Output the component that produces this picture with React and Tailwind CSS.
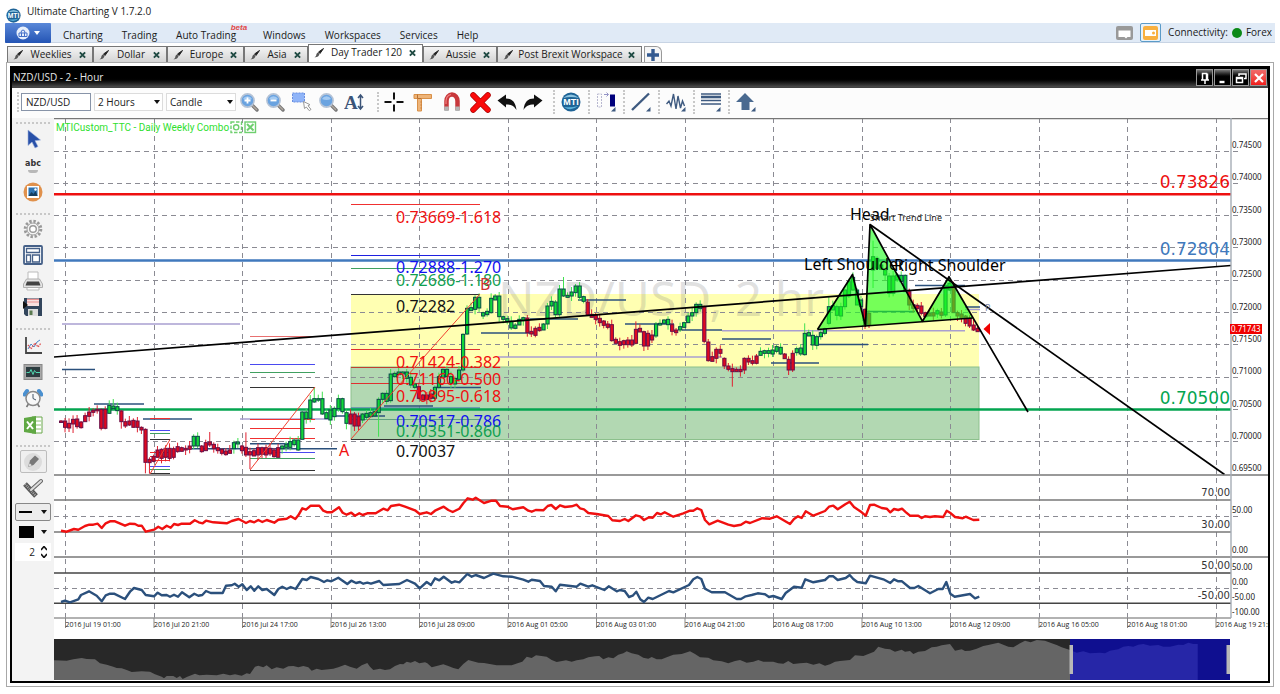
import { useState } from 'react';

const TABS = [
    { name: 'Weeklies', width: 'w-[86px]' },
    { name: 'Dollar', width: 'w-[74px]' },
    { name: 'Europe', width: 'w-[77px]' },
    { name: 'Asia', width: 'w-[64px]' },
    { name: 'Day Trader 120', width: 'w-[115px]' },
    { name: 'Aussie', width: 'w-[74px]' },
    { name: 'Post Brexit Workspace', width: 'w-[145px]' },
]

const MENU = ['Charting', 'Trading', 'Auto Trading', 'Windows', 'Workspaces', 'Services', 'Help']

const DATES = [
    '2016 Jul 19 01:00', '2016 Jul 20 21:00', '2016 Jul 24 17:00', '2016 Jul 26 13:00', '2016 Jul 28 09:00',
    '2016 Aug 01 05:00', '2016 Aug 03 01:00', '2016 Aug 04 21:00', '2016 Aug 08 17:00', '2016 Aug 10 13:00',
    '2016 Aug 12 09:00', '2016 Aug 16 05:00', '2016 Aug 18 01:00', '2016 Aug 19 21:00',
]

// candle bodies as "top-bottom" in thirds of a unit below the given origin, r / g switches the colour
const CANDLES = [
    {
        origin: 340,
        bars: `r 243-247 243-262 250-264 238-252 237-260 246-263 227-245 216-229 211-217 208-212 208-265 208-265
        g 196-220 198-206 200-212 r 213-245 245-258 243-255 241-262 243-262 262-270 268-367 358-368 350-364 330-352
        328-355 325-352 325-355 326-352 320-335 323-334 325-330 318-328 g 289-318 289-318 r 318-335 308-332 306-315
        313-326 323-332 328-340 333-344 330-340 g 308-326 306-312 r 318-332 322-345 335-345 332-348 323-345 323-343
        323-345 325-342 330-350 323-352 g 318-326 314-322 305-322 300-314 300-330 216-298 216-236 180-235 176-186
        176-180 176-222 218-236`,
    },
    {
        origin: 190,
        bars: `g 660-690 655-680 626-656 626-665 668-700 r 672-702 672-708 680-708 g 672-690 670-682 668-680 665-678
        628-668 610-628 610-634 552-632 550-560 546-554 546-552 546-565 562-585 582-592 r 590-625 615-630 615-628
        612-625 g 592-625 560-592 538-562 538-560 560-580 565-582 540-568 433-540 355-432 353-362 322-358 322-354
        368-378 364-374 325-368 318-330 318-380 380-388 386-394 394-414 405-415 388-405 383-392 r 384-428 424-432
        415-436 412-422 g 402-420 348-402 334-348 336-374 297-374 297-318 316-322 306-318 288-308 288-322 320-334
        r 336-375 373-382 375-388 385-398 393-406 402-412 404-452 448-460 455-466 452-464 450-464 450-465 418-460
        415-426 425-468 430-468 435-450 g 402-438 400-405 390-400 388-404 r 404-424 420-428 g 410-420 398-412
        378-398 368-378 343-368 343-356 r 350-454 456-512 500-514 478-505 478-490 505-528 528-538 536-545 538-545
        538-545 505-540 505-516 512-520 498-520 g 484-496 482-490 482-490 480-492 470-484 472-492 r 492-506 508-540
        490-540 g 476-488 474-492 430-494 428-438 436-465 440-466 428-440 416-430 350-400 347-360 350-376 350-378
        300-350 275-318 262-300 300-345 330-350 r 358-405 370-405 g 200-240 205-235 225-238 240-255 258-310 258-310
        255-270 256-275 256-305 r 305-345 344-355 346-356 348-370 368-380 370-378 368-378 g 362-372 r 366-376
        g 290-375 280-300 r 290-368 368-378 372-385 378-400 385-408 405-420 415-425`,
    },
]

// long wicks, by candle index: [up, down]
const LONG_WICKS = { 3: [4, 9], 13: [7, 1], 15: [1, 7], 21: [1, 11], 22: [2, 11], 37: [10, 2], 46: [15, 2], 47: [4, 14], 63: [11, 1], 65: [7, 1], 71: [3, 6], 79: [2, 24], 125: [12, 1], 143: [8, 1], 167: [5, 15], 182: [3, 2], 185: [10, 1], 191: [10, 2], 202: [16, 18] }

const buildCandles = () => {
    const list = []
    let color = 'r'
    CANDLES.forEach(({ origin, bars }) => {
        bars.trim().split(/\s+/).forEach((token) => {
            if (token === 'r' || token === 'g') {
                color = token
                return
            }
            const [top, bottom] = token.split('-').map((n) => origin + Number(n) / 3)
            const i = list.length
            const wick = LONG_WICKS[i] || [((i * 7) % 5) + 1, ((i * 11) % 6)]
            list.push({ x: 61 + i * 4.02, top, bottom, high: top - wick[0], low: bottom + wick[1], color })
        })
    })
    return list
}

const RSI = [
    [50, '33,152 50,155 72,147 85,149 105,138 118,134 130,134 143,131 155,144 167,130 180,124 195,124 225,137 240,131 255,132 265,137 275,137 287,155 312,149 325,140 337,147 350,137 362,143 372,132 384,135 395,131 420,131 434,121 446,127 458,130 468,122 490,127 530,130 545,123 566,117 588,129 600,123 613,127 625,120 637,126 650,120 673,128 685,119 710,116 722,109 736,117 745,106 757,85 768,89 782,77 808,77 820,92 832,97 845,97 867,82 878,98 890,104 904,98 915,107 928,100 938,105 952,100 977,100 1000,86 1013,91 1023,78 1047,74 1065,80 1095,91 1109,102 1130,97 1143,102 1155,92 1181,80 1195,90 1208,96 1228,86 1240,70 1253,55 1268,59 1277,53'],
    [480, '12,69 35,62 48,62 60,78 83,80 98,88 130,82 145,92 155,95 167,90 190,91 203,78 214,75 227,87 240,76 255,81 275,79 290,74 300,85 312,88 325,99 350,102 385,108 397,121 420,123 434,117 445,123 468,106 480,109 492,120 507,112 518,113 531,99 543,103 554,97 580,110 610,100 630,92 640,92 652,85 664,90 675,120 688,133 713,122 745,134 762,138 783,134 797,125 810,129 845,115 870,116 890,109 930,132 942,117 954,109 965,114 977,94 1000,107 1035,93 1047,80 1060,77 1073,88 1096,73 1109,65 1122,81 1145,97 1157,107'],
    [870, '0,75 12,74 35,84 50,86 61,97 72,87 85,90 96,86 108,97 120,107 145,107 155,114 165,109 180,111 195,109 220,111 230,92 240,98 255,111 278,115 287,110 310,120 328,119'],
]

const MOMENTUM = [
    [50, '33,366 45,362 60,367 85,358 93,345 117,334 140,347 155,364 167,346 180,341 192,341 225,357 240,335 252,324 275,330 287,345 312,349 323,338 335,346 350,345 360,350 372,344 384,350 396,337 418,352 433,341 445,347 457,345 468,333 482,339 518,339 528,317 545,316 554,311 566,320 577,313 590,330 602,319 613,332 625,319 637,330 650,327 673,345 685,327 697,320 710,327 722,321 737,327 757,297 770,300 782,291 805,297 822,306 832,301 844,304 865,293 892,312 904,302 918,309 930,306 940,311 952,308 963,311 988,303 1000,315 1048,312 1071,300 1095,311 1109,325 1130,306 1143,315 1155,295 1168,301 1181,290 1205,308 1215,304 1228,307 1252,282 1265,290 1277,285'],
    [480, '12,294 40,281 70,289 95,290 130,299 145,305 155,299 180,303 192,318 215,320 227,334 240,314 290,320 301,311 325,320 337,316 373,330 386,319 410,334 420,330 434,333 447,351 458,347 469,335 481,358 492,366 505,353 518,357 567,333 580,337 627,315 640,298 652,291 664,297 675,326 695,337 735,337 770,357 783,357 797,349 815,345 833,340 855,343 867,351 880,348 905,357 917,339 942,320 965,323 976,298 1000,307 1035,300 1047,289 1060,289 1073,300 1097,294 1109,285 1120,297 1132,306 1157,310'],
    [870, '0,287 40,298 61,309 72,298 85,304 96,304 120,324 133,324 145,318 180,340 205,327 218,327 229,306 241,341 254,350 300,342 315,355 328,350'],
]

const HISTORY = [
    [50, '12,541 50,542 70,538 95,534 110,537 135,538 150,550 170,554 190,560 200,564 215,565 230,570 245,576 275,574 300,575 315,583 335,590 342,595 350,588 370,588 380,594 390,588 398,597 412,590 435,581 448,586 470,584 500,586 520,581 540,586 555,583 575,587 590,580 600,582 615,560 625,557 640,562 650,556 665,568 680,562 700,566 715,559 730,558 745,562 760,558 775,562 785,572 800,566 815,570 850,566 865,562 885,554 900,560 920,566 935,556 952,549 960,560 970,570 990,566 1005,570 1020,568 1035,558 1050,552 1060,553 1070,545 1082,548 1095,543 1108,550 1125,547 1132,550 1145,562 1160,558 1180,553 1195,558 1210,564 1225,568 1240,552 1255,540 1285,548'],
    [480, '12,549 50,556 95,556 115,549 127,545 140,530 155,534 168,526 200,530 215,540 230,546 258,541 275,545 290,541 310,538 325,532 345,529 358,528 370,538 385,532 400,535 415,524 430,520 440,514 455,520 475,524 490,533 505,536 515,531 530,538 545,538 560,532 580,524 605,522 630,514 645,522 660,532 685,533 700,541 725,544 745,550 765,543 780,540 800,548 820,545 835,540 850,545 880,545 895,550 910,551 925,543 940,552 960,550 980,548 1000,554 1018,550 1035,557 1050,553 1065,545 1080,543 1110,540 1125,526 1150,528'],
    [870, '12,515 25,500 45,506 60,508 75,515 95,509 105,515 120,513 130,522 145,515 165,513 185,502 200,500 215,496 240,492 255,512 275,508 285,513 300,512 320,506 340,498 355,495 385,488 400,494 415,500 430,502 450,490 465,482 482,487 500,480 525,482 545,490 560,495 575,502 600,510 620,518 640,514 660,520 690,518 705,520 720,512 745,508 760,500 775,498 790,500 805,494 820,492 840,497 865,495 880,500 900,500 925,494 940,495 955,488 970,492 983,492'],
]

const tracePoints = (trace) =>
    trace.map(([left, pairs]) =>
        pairs.split(' ').map((pair) => {
            const [x, y] = pair.split(',').map(Number)
            return `${(left + x / 3).toFixed(1)},${(480 + y / 3).toFixed(1)}`
        }).join(' ')
    ).join(' ')

const NAVY = '#2b507c'
const PURPLE = '#a99fd0'

// [x1, x2, y, colour]
const PIVOTS = [
    [62, 240, 324, PURPLE], [62, 95, 369.5, NAVY], [94, 144, 404, NAVY], [143, 192, 419, NAVY],
    [192, 337, 448.7, NAVY], [250, 292, 443.7, NAVY], [240, 331, 419, PURPLE], [331, 385, 416, NAVY],
    [384, 433, 406, NAVY], [434, 481, 387.5, NAVY], [481, 535, 333, NAVY], [530, 578, 319, NAVY],
    [578, 626, 300, NAVY], [498, 722, 357, PURPLE], [625, 674, 324, NAVY], [682, 722, 330, NAVY],
    [722, 965, 330.7, PURPLE], [722, 771, 339, NAVY], [771, 819, 363, NAVY], [819, 868, 344.5, NAVY],
    [867, 915, 311.5, NAVY], [915, 965, 285.5, NAVY], [965, 980, 307, NAVY], [965, 980, 309.5, PURPLE],
]

const FIB_LINES = [
    [250, 315, 336.5, '#e87070'], [250, 315, 364.5, '#4a4af0'], [250, 315, 372.5, '#40a060'], [250, 315, 387.5, '#333'],
    [250, 315, 419.5, '#f03030'], [250, 315, 428.5, '#f03030'], [250, 315, 438.5, '#f03030'], [250, 315, 452.5, '#4a4af0'],
    [250, 315, 458.5, '#40a060'], [250, 315, 470.5, '#333'],
    [150, 170, 418.5, '#f03030'], [150, 170, 430.5, '#4a4af0'], [150, 170, 433.5, '#40a060'], [150, 170, 439.5, '#333'],
    [150, 170, 452.5, '#f03030'], [150, 170, 456.5, '#f03030'], [150, 170, 460.5, '#f03030'], [150, 170, 466.5, '#4a4af0'],
    [150, 170, 469.5, '#40a060'], [150, 170, 473.5, '#333'],
    [351, 480, 204.5, '#f03030'], [351, 480, 255.5, '#2020e0'], [351, 480, 268.5, '#40a060'], [351, 480, 294.5, '#333'],
    [351, 480, 349.5, '#e03030'], [351, 480, 367.5, '#c04030'], [351, 480, 383.5, '#e03030'], [351, 480, 408, '#3060b0'],
    [351, 480, 419.5, '#60a080'], [351, 480, 439.5, '#333'],
]

const FIB_LABELS = [
    ['0.73669-1.618', 222.5, '#f01010'], ['0.72888-1.270', 273, '#1010f0'], ['0.72686-1.180', 286, '#10a050'],
    ['0.72282', 312, '#111'], ['0.71424-0.382', 367.5, '#f01010'], ['0.71160-0.500', 385, '#f01010'],
    ['0.70895-0.618', 402, '#f01010'], ['0.70517-0.786', 426.5, '#1010f0'], ['0.70351-0.860', 437, '#10a050'],
    ['0.70037', 457, '#111'],
]

const LEVELS = [
    { label: '0.73826', y: 194.3, color: '#ee1010' },
    { label: '0.72804', y: 260.6, color: '#4079bd' },
    { label: '0.70500', y: 409.6, color: '#04a550' },
]

const PriceChart = () => {
    const candles = buildCandles()
    const gridX = DATES.map((_, i) => 65.5 + i * 88.5)
    const gridY = Array.from({ length: 10 }, (_, i) => 151 + i * 32.33)

    return (
        <svg viewBox="54 118 1214 518" className="block h-auto w-full bg-white" role="img" aria-label="NZD/USD 2 hour candles">
            <rect x="351" y="294" width="628" height="73" fill="#ffffb2" />
            <rect x="351" y="367" width="628" height="72.5" fill="#b2d8b2" stroke="#8cc08c" />
            <text x="498" y="316" className="font-['Noto_Sans'] text-[48px]" fill="#777" fillOpacity=".22">NZD/USD, 2 hr</text>

            <g stroke="#8b8b93" strokeDasharray="5 4" shapeRendering="crispEdges">
                {gridX.map((x) => <line key={x} x1={x} x2={x} y1="118" y2="618" />)}
                {gridY.map((y) => <line key={y} x1="54" x2="1238" y1={y} y2={y} />)}
                <line x1="54" x2="1238" y1="516" y2="516" />
                <line x1="54" x2="1238" y1="588" y2="588" />
            </g>

            {PIVOTS.map(([x1, x2, y, color], i) => <line key={i} x1={x1} x2={x2} y1={y} y2={y} stroke={color} strokeWidth="1.5" />)}
            {FIB_LINES.map(([x1, x2, y, color], i) => <line key={i} x1={x1} x2={x2} y1={y} y2={y} stroke={color} />)}
            {LEVELS.map(({ y, color }) => <line key={y} x1="54" x2="1231" y1={y} y2={y} stroke={color} strokeWidth="2.5" />)}

            {candles.map(({ x, top, bottom, high, low, color }, i) => (
                <g key={i}>
                    <line x1={x} x2={x} y1={high} y2={low} stroke={color === 'r' ? '#e02030' : '#40e050'} />
                    <rect x={x - 1.5} y={top} width="3.2" height={Math.max(bottom - top, 1.5)}
                        fill={color === 'r' ? '#e00820' : '#10d838'} stroke={color === 'r' ? '#681048' : '#0a4848'} />
                </g>
            ))}

            <g stroke="#f04030">
                <line x1="150" y1="474" x2="170" y2="439.5" />
                <line x1="250" y1="470" x2="315" y2="387" />
                <line x1="351" y1="439" x2="480" y2="294" />
            </g>

            <path d="M817.5 329.5 852.5 274.5 865.5 326 870 224.5 922.5 321.3 949 276.7 972.7 318Z" fill="#20ff20" fillOpacity=".62" />
            <g fill="none" stroke="#000" strokeWidth="1.7" strokeLinejoin="round">
                <path d="M817.5 329.5 852.5 274.5 865.5 326 870 224.5 922.5 321.3 949 276.7 1028 412" />
                <path d="M817.5 329.5 972.7 318" />
                <path d="M54 357 1231 265.5" />
                <path d="M870 224.5 1224.5 474.5" />
            </g>
            <path d="M983.5 329 990 323v12Z" fill="#f00000" />

            <g className="font-['Noto_Sans'] text-[16px]">
                {FIB_LABELS.map(([label, y, color]) => <text key={label} x="396" y={y} fill={color}>{label}</text>)}
                <text x="339" y="456" fill="#f01010">A</text>
                <text x="480" y="290" fill="#d03030">B</text>
                <text x="850" y="220">Head</text>
                <text x="804" y="270">Left Shoulder</text>
                <text x="894" y="271">Right Shoulder</text>
            </g>
            <text x="870" y="221" className="font-['Noto_Sans'] text-[9px]" fill="#222">Smart Trend Line</text>
            <text x="985" y="311" className="font-['Noto_Sans'] text-[9px]" fill="#7a86a8">P</text>

            <g className="font-['DejaVu_Sans'] text-[17px]" textAnchor="end">
                {LEVELS.map(({ label, y, color }) => <text key={label} x="1230" y={y - 6} fill={color}>{label}</text>)}
            </g>

            {/* indicator panels */}
            <g stroke="#777" strokeWidth="1.4">
                <line x1="54" x2="1268" y1="118.5" y2="118.5" />
                <line x1="54" x2="1268" y1="475" y2="475" />
                <line x1="54" x2="1231" y1="500" y2="500" />
                <line x1="54" x2="1231" y1="532" y2="532" />
                <line x1="54" x2="1268" y1="557" y2="557" />
                <line x1="54" x2="1231" y1="573" y2="573" stroke="#444" />
                <line x1="54" x2="1231" y1="603.3" y2="603.3" stroke="#444" />
                <line x1="54" x2="1231" y1="618" y2="618" stroke="#999" />
                <line x1="1231" x2="1231" y1="118" y2="618" stroke="#a5adb5" />
            </g>
            <polyline points={tracePoints(RSI)} fill="none" stroke="#f01010" strokeWidth="2.4" strokeLinejoin="round" />
            <polyline points={tracePoints(MOMENTUM)} fill="none" stroke={NAVY} strokeWidth="2.4" strokeLinejoin="round" />

            <g className="font-['DejaVu_Sans'] text-[10px]" fill="#333" textAnchor="end">
                <text x="1230" y="496">70.00</text>
                <text x="1230" y="528">30.00</text>
                <text x="1230" y="569">50.00</text>
                <text x="1230" y="599">-50.00</text>
            </g>
            <g className="font-['Noto_Sans'] text-[8px]" fill="#222">
                {gridY.map((y, i) => <text key={y} x="1232" y={y - 3}>{(0.745 - i * 0.005).toFixed(5)}</text>)}
                <text x="1232" y="471">0.69500</text>
                <text x="1232" y="513">50.00</text>
                <text x="1232" y="553">0.00</text>
                <text x="1232" y="570">50.00</text>
                <text x="1232" y="585">0.00</text>
                <text x="1232" y="600">-50.00</text>
                <text x="1232" y="615">-100.00</text>
            </g>
            <rect x="1230" y="324" width="32" height="10" fill="#f00000" />
            <text x="1231" y="332" className="font-['Noto_Sans'] text-[8px]" fill="#fff">0.71743</text>

            <g className="font-['Open_Sans'] text-[7px]" fill="#222">
                {DATES.map((date, i) => (
                    <g key={date}>
                        <line x1={gridX[i]} x2={gridX[i]} y1="618" y2="628" stroke="#888" />
                        <text x={gridX[i]} y="627">{date}</text>
                    </g>
                ))}
            </g>
            <text x="56" y="131" className="font-['Roboto'] text-[10px]" fill="#2fe02f">MTICustom_TTC - Daily Weekly Combo</text>
            <g fill="none" stroke="#6fcf6f" strokeWidth="1.4">
                <rect x="231" y="122" width="10.5" height="10.5" strokeDasharray="3.5 1.5" />
                <circle cx="236.2" cy="127.3" r="2.6" />
                <rect x="245" y="122" width="10.5" height="10.5" />
                <path d="m247 124 6.5 6.5m0-6.5-6.5 6.5" strokeWidth="2" />
            </g>
        </svg>
    )
}

const Navigator = () => {
    const points = tracePoints(HISTORY)
    return (
        <svg viewBox="54 639 1176 41" preserveAspectRatio="none" className="block h-[41px] w-full bg-[#282828]" role="img" aria-label="History range">
            <polygon points={`54,680 ${points} 1197.7,680`} fill="#656565" />
            <rect x="1070" y="639" width="160" height="41" fill="#0000d0" fillOpacity=".62" />
            <rect x="1069.5" y="645" width="3.5" height="29" fill="#b8b8b8" />
            <rect x="1226.5" y="645" width="3.5" height="29" fill="#b8b8b8" />
        </svg>
    )
}

const Svg = ({ size = 'h-5 w-5', children }) => (
    <svg viewBox="0 0 20 20" className={`${size} shrink-0`} fill="none" aria-hidden="true">{children}</svg>
)

const Caret = ({ color = '#111', className = 'h-1 w-[6px]' }) => (
    <svg viewBox="0 0 6 4" className={className} aria-hidden="true"><path d="M0 0h6L3 4Z" fill={color} /></svg>
)

const Magnifier = ({ children }) => (
    <Svg>
        <path d="m13 13 5 5" stroke="#777" strokeWidth="3.4" strokeLinecap="round" />
        <path d="m13 13 4.6 4.6" stroke="#b0a8a0" strokeWidth="1.4" strokeLinecap="round" />
        <circle cx="8.5" cy="8.5" r="6.6" fill="#6aa3e0" stroke="#b5c3d6" strokeWidth="1.6" />
        <path d="M4 7a5 5 0 0 1 9 0q-4.5 2-9 0" fill="#a3caf2" />
        {children}
    </Svg>
)

const Globe = ({ size }) => (
    <Svg size={size}>
        <circle cx="10" cy="10" r="9.5" fill="#1d6396" />
        <path d="M2 6q8-7 16 0-8-2-16 0" fill="#8cc3e0" />
        <path d="M3 15q7 5 14-1-7 2-14 1" fill="#5ab0d8" />
        <text x="10" y="13" textAnchor="middle" className="font-['Liberation_Sans'] text-[9px] font-bold" fill="#fff">MTI</text>
    </Svg>
)

const Corner = () => <path d="M19.5 15v4.5H15Z" fill="#3e5a80" />

const ToolButton = ({ label, width = 'w-[26px]', children }) => (
    <button aria-label={label} title={label} className={`flex h-6 items-center justify-center ${width}`}>{children}</button>
)

const ToolGroup = ({ label, children }) => (
    <div className="flex w-[35px] items-center border-l-2 border-dotted border-[#c8c8c8]">
        <ToolButton label={label} width="w-[31px]">{children}</ToolButton>
    </div>
)

const Picker = ({ label, value, options, width }) => (
    <div className={`relative ${width}`}>
        <select aria-label={label} defaultValue={value} className="block h-[18px] w-full appearance-none border border-[#dcdcdc] bg-white pl-[3px] text-[10px] leading-[16px] text-[#222]">
            {options.map((option) => <option key={option}>{option}</option>)}
        </select>
        <Caret className="pointer-events-none absolute right-[3px] top-[7px] h-1 w-[6px]" />
    </div>
)

const Toolbar = () => {
    const [symbol, setSymbol] = useState('NZD/USD')
    return (
        <div className="flex h-[30px] items-center bg-[#fcfcfc] pb-[2px] pl-[5px]">
            <span className="mr-[2px] h-5 border-l-2 border-dotted border-[#c8c8c8]"></span>
            <input aria-label="Symbol" value={symbol} onChange={(e) => setSymbol(e.target.value)} className="mr-[3px] h-[18px] w-[70px] border border-[#8894a8] bg-white pl-1 text-[10px] text-[#222]" />
            <Picker label="Period" value="2 Hours" options={['1 Hour', '2 Hours', '4 Hours']} width="mr-[3px] w-[69px]" />
            <Picker label="Chart type" value="Candle" options={['Candle', 'Bar', 'Line']} width="w-[70px]" />
            <ToolButton label="Zoom in"><Magnifier><path d="M5.5 8.5h6m-3-3v6" stroke="#fff" strokeWidth="1.8" /></Magnifier></ToolButton>
            <ToolButton label="Zoom out"><Magnifier><path d="M5.5 8.5h6" stroke="#fff" strokeWidth="1.8" /></Magnifier></ToolButton>
            <ToolButton label="Select area" width="w-[27px]">
                <Svg>
                    <rect x=".5" y="1" width="12" height="9" fill="#8fb4f8" stroke="#6a8fe0" strokeDasharray="2 1" />
                    <path d="m11.5 9.5 1 7 1.8-1.5 3 3.7 1.7-1.3-3-3.7 2-1Z" fill="#fff" stroke="#999" />
                </Svg>
            </ToolButton>
            <ToolButton label="Reset zoom"><Magnifier /></ToolButton>
            <ToolButton label="Text size">
                <Svg>
                    <text x="0" y="17" className="font-['Liberation_Serif'] text-[19px] font-bold" fill="#3b5478">A</text>
                    <path d="M16.5 3v14m-2.5-11 2.5-3 2.5 3m-5 8 2.5 3 2.500-3" stroke="#3b5478" strokeWidth="1.5" />
                </Svg>
            </ToolButton>
            <span className="ml-[10px] h-5 border-l-2 border-dotted border-[#c8c8c8]"></span>
            <ToolButton label="Crosshair" width="w-[29px]"><Svg><path d="M10 .5v7m0 5v7M.5 10h7m5 0h7" stroke="#111" strokeWidth="2" /></Svg></ToolButton>
            <ToolButton label="Ruler" width="w-[29px]">
                <Svg><path d="M1 2.5h17.5v4H8.5V19h-4V6.5H1Z" fill="#eeb478" stroke="#d89048" /><path d="M4.5 6.500v-4m4 4h-4m3 3.500h1m-1 3h1m-1 3h1" stroke="#b87030" /></Svg>
            </ToolButton>
            <ToolButton label="Magnet" width="w-[29px]">
                <Svg><path d="M4.5 18V9a5.5 6.5 0 0 1 11 0v9" stroke="#c8383c" strokeWidth="4.5" /><path d="M4.5 14.5V19m11-4.5V19" stroke="#b4b4b4" strokeWidth="4.5" /><path d="M4 12V9a6 7 0 0 1 5-6.5" stroke="#f08080" strokeWidth="1.2" /></Svg>
            </ToolButton>
            <ToolButton label="Delete" width="w-[28px]"><Svg size="h-[21px] w-[21px]"><path d="M3 3 17 17M17 3 3 17" stroke="#a80000" strokeWidth="5.5" strokeLinecap="round" /><path d="M3 3 17 17M17 3 3 17" stroke="#fa0a0a" strokeWidth="4.3" strokeLinecap="round" /></Svg></ToolButton>
            <ToolButton label="Undo"><Svg><path d="M.5 8.5 9 2.5v4c6 0 9.5 3 10.5 11.5-2.500-4-5-5.500-10.500-5.500v3Z" fill="#111" /></Svg></ToolButton>
            <ToolButton label="Redo"><Svg><path d="M19.5 8.5 11 2.5v4C5 6.5 1.5 9.5.5 18c2.500-4 5-5.500 10.500-5.500v3Z" fill="#111" /></Svg></ToolButton>
            <div className="ml-[7px] flex">
                <ToolGroup label="MTI tools"><Globe /></ToolGroup>
                <ToolGroup label="Candle shift"><Svg><path d="M1.5 2h4v13h-4Z" stroke="#b8b8d0" strokeDasharray="2 1" /><path d="M8 2.5h4m-1.5-2 2 2-2 2" stroke="#7878b8" strokeWidth=".8" /><path d="M14 2.5h5v12h-5Z" fill="#00007c" /><Corner /></Svg></ToolGroup>
                <ToolGroup label="Line"><Svg><path d="M1 18 18 1.5" stroke="#3e5a80" strokeWidth="2.4" /><Corner /></Svg></ToolGroup>
                <ToolGroup label="Wave"><Svg><path d="m.5 12 2.5-3 2 5 2.5-12L10 17l2-13 2.5 12 2-7 2 5" stroke="#3e5a80" strokeWidth="1.4" /><Corner /></Svg></ToolGroup>
                <ToolGroup label="Fibonacci"><Svg><path d="M0 2h20M0 8.5h20M0 12h20" stroke="#3e5a80" strokeWidth="1.6" /><path d="M0 5h20" stroke="#3e5a80" strokeWidth="2.6" /><Corner /></Svg></ToolGroup>
                <ToolGroup label="Arrow"><Svg><path d="M9 1 18 10h-4.5v8h-8v-8H0Z" fill="#4a6a90" /><Corner /></Svg></ToolGroup>
            </div>
        </div>
    )
}

const SideButton = ({ label, height = 'h-[26px]', children }) => (
    <button aria-label={label} title={label} className={`flex w-full items-center justify-center ${height}`}>{children}</button>
)

const Divider = () => <div className="mx-1 h-[10px] border-t-2 border-dotted border-[#c8c8c8]"></div>

const SideBar = () => {
    const [size, setSize] = useState('2')
    return (
        <div className="flex w-[42px] shrink-0 flex-col bg-[#f3f3f3] pt-1">
            <Divider />
            <SideButton label="Pointer" height="-mt-[7px] h-[27px]"><Svg><path d="M5 1v15.5l4-3.5 3 6 3-1.5-3-5.8 5.5-.7Z" fill="#2850a8" stroke="#9ab0dc" strokeWidth=".6" /></Svg></SideButton>
            <SideButton label="Text" height="h-[27px]"><span className="font-['DejaVu_Sans'] text-[8px] font-bold leading-[12px] text-[#333]">abc<span className="mx-auto block h-[3px] w-[10px] rounded-b-full bg-[#b8b8b8]"></span></span></SideButton>
            <SideButton label="Image">
                <Svg><circle cx="10" cy="10" r="9.5" fill="#e0914c" /><rect x="4" y="4" width="12" height="12" fill="#fff" /><rect x="5.5" y="5.5" width="9" height="8.5" fill="#2d72b0" /><path d="m5.5 14 3-4 2 2 2-3 2 5Z" fill="#153e60" /><circle cx="12.5" cy="7.5" r="1.2" fill="#fff" /></Svg>
            </SideButton>
            <div className="h-[8px]"></div>
            <Divider />
            <SideButton label="Settings" height="-mt-[7px] h-[26px]"><Svg><circle cx="10" cy="10" r="7.8" stroke="#999" strokeWidth="3" strokeDasharray="2.4 1.7" /><circle cx="10" cy="10" r="6" fill="#f4f4f4" stroke="#a0a0a0" /><circle cx="10" cy="10" r="3.3" fill="#fff" stroke="#999" strokeWidth="1.4" /></Svg></SideButton>
            <SideButton label="Layout"><Svg><rect x="1" y="1" width="18" height="18" rx="1" fill="#fff" stroke="#456088" strokeWidth="1.8" /><path d="M3.5 3.5h13v4h-13Zm0 6.5h4v7h-4Zm6 0h7v7h-7Z" stroke="#456088" strokeWidth="1.3" /></Svg></SideButton>
            <SideButton label="Print"><Svg><path d="M5 9V1h10v8M4 13v6h12v-6" fill="#fff" stroke="#bbb" /><path d="m3.5 8-3 5v3.5h19V13l-3-5Z" fill="#e4e4e4" stroke="#b0b0b0" /><path d="M4 10.5h12l1.5 4h-15Z" fill="#444" /></Svg></SideButton>
            <SideButton label="Save"><Svg><path d="M1 1h18v18H3l-2-2Z" fill="#32455c" /><path d="M4 1.5h12V9H4Z" fill="#f8e0e0" /><path d="M4 2.5h12M4 5h12" stroke="#e89090" /><path d="M5 12h10v7H5Z" fill="#ddd" /><path d="M6.5 13.5h3V18h-3Z" fill="#5a7a50" /><path d="m0 4 5 4-5 4Z" fill="#111" /></Svg></SideButton>
            <div className="h-[8px]"></div>
            <Divider />
            <SideButton label="Indicators" height="-mt-[5px] h-[26px]"><Svg><path d="M3 1v16h16" stroke="#444" strokeWidth="1.8" /><path d="m5 13 3-5 3 3 3-5 3-2" stroke="#4888c8" /><path d="m5 9 3 4 4-6 3 4 3-4" stroke="#e05050" strokeDasharray="1.5 1" strokeWidth="1.3" /></Svg></SideButton>
            <SideButton label="Monitor"><Svg><rect x="1" y="2.5" width="18" height="15" fill="#a8a8a8" stroke="#888" /><rect x="3" y="5" width="14" height="10" fill="#2d3c40" /><path d="M3.5 10.5h3l1.5-3 2 5 1.5-4 1.5 2h4" stroke="#50d8b0" /></Svg></SideButton>
            <SideButton label="Alerts"><Svg><path d="M4 3 1.5 6.5M16 3l2.5 3.5" stroke="#4a90d0" strokeWidth="4" strokeLinecap="round" /><path d="m5.5 16-2 3m11-3 2 3" stroke="#777" strokeWidth="1.6" /><circle cx="10" cy="10.5" r="7" fill="#f8f8f8" stroke="#888" strokeWidth="1.5" /><path d="M10 6v4.5l3 1.5" stroke="#456" /></Svg></SideButton>
            <SideButton label="Export to Excel" height="h-[27px]"><Svg><path d="M9 2h10v16H9Z" fill="#fff" stroke="#6aa84c" /><path d="M13 6h5m-5 4h5m-5 4h5" stroke="#8cc070" /><path d="m1 3 12-2v18L1 17Z" fill="#60a844" /><path d="m4 6.5 6 7.5m0-7.5L4 14" stroke="#fff" strokeWidth="2" /></Svg></SideButton>
            <div className="h-[7px]"></div>
            <Divider />
            <button aria-label="Draw" className="mx-auto -mt-[5px] flex h-[23px] w-[27px] items-center justify-center rounded-[2px] border border-[#bdbdbd] bg-[#efefef]"><Svg><circle cx="10" cy="10" r="9" fill="#dcdcdc" /><path d="m5.5 14.5 1.5-6 5-5 4 3.5-5.5 6Z" fill="#777" /><path d="m5.5 14.5 1-3.5 2.5 2.5Z" fill="#fff" stroke="#888" strokeWidth=".5" /></Svg></button>
            <SideButton label="Measure" height="h-[30px]"><Svg><path d="m2 6 11 12" stroke="#555" strokeWidth="5" /><path d="m2 6 11 12" stroke="#aaa" strokeWidth="2.5" strokeDasharray="1 1" /><path d="m8 12 10-9" stroke="#666" strokeWidth="4" strokeLinecap="round" /><path d="m8 12 10-9" stroke="#ddd" strokeWidth="2" strokeLinecap="round" /></Svg></SideButton>
            <button aria-label="Line style" className="mx-[3px] flex h-[18px] items-center justify-between rounded-[2px] border border-[#888] bg-[#ececec] px-[3px]">
                <span className="h-[2px] w-[13px] bg-black"></span>
                <Caret />
            </button>
            <button aria-label="Line colour" className="mx-[3px] mt-[3px] flex h-[16px] items-center justify-between px-1">
                <span className="h-3 w-[15px] bg-black"></span>
                <Caret />
            </button>
            <div className="mx-[3px] mt-[3px] flex h-[18px] items-center justify-end gap-[6px] bg-white pr-1">
                <input aria-label="Line width" value={size} onChange={(e) => setSize(e.target.value)} className="w-4 bg-transparent text-right text-[10px]" />
                <svg viewBox="0 0 6 12" className="h-3 w-[6px]" aria-hidden="true"><path d="m0 4 3-3.500L6 4M0 8l3 3.500L6 8" fill="none" stroke="#111" strokeWidth="1.6" /></svg>
            </div>
        </div>
    )
}

const WindowButton = ({ label, color = 'bg-linear-to-b from-[#777] via-black to-black', children }) => (
    <button aria-label={label} className={`flex h-[17px] w-[17px] items-center justify-center border border-[#999] ${color}`}>
        <svg viewBox="0 0 12 12" className="h-3 w-3" fill="none" stroke="#fff" strokeWidth="1.5" aria-hidden="true">{children}</svg>
    </button>
)

const ChartWindow = () => (
    <div className="flex flex-col border-2 border-black bg-white">
        <div className="flex h-[20px] items-center justify-between border-b border-[#444] bg-linear-to-b from-black via-black to-[#4c4c4c] px-px">
            <h1 className="text-[10px] text-[#e8e8e8]">NZD/USD - 2 - Hour</h1>
            <div className="flex gap-px">
                <WindowButton label="Pin"><path d="M3.5 7.5v-6h4v6M2 8h8M6 8v4M8.5 1.5v6" /></WindowButton>
                <WindowButton label="Minimize"><path d="M2.5 10h5" strokeWidth="2.4" /></WindowButton>
                <WindowButton label="Restore"><path d="M4 4V2h7v4.5H9M1.5 5.5h6v5h-6Zm0 1h6" /></WindowButton>
                <WindowButton label="Close" color="bg-linear-to-b from-[#f06868] to-[#f01818]"><path d="m2 2 8 8m0-8-8 8" strokeWidth="2.2" /></WindowButton>
            </div>
        </div>
        <Toolbar />
        <div className="flex">
            <SideBar />
            <div className="min-w-0 flex-1">
                <PriceChart />
                <div className="mt-[3px] pb-px pr-[38px]"><Navigator /></div>
            </div>
        </div>
    </div>
)

const MenuBar = () => (
    <div className="mx-[5px] flex h-5 items-center border-b border-[#c8d4e4] bg-[#e0eaf6] text-[10px]">
        <button aria-label="Application menu" className="mr-[12px] flex h-5 w-[46px] items-center justify-center gap-1 rounded-[1px] bg-linear-to-b from-[#5a88d8] to-[#2454b4]">
            <svg viewBox="0 0 14 14" className="h-[14px] w-[14px]" aria-hidden="true"><circle cx="7" cy="7" r="6.5" fill="#e8f0fc" /><path d="M3 7h8v3.5H3Zm2 0a2 3 0 0 1 4 0M5.5 7v3.5m3-3.500v3.500" fill="none" stroke="#4470c8" /></svg>
            <Caret color="#fff" />
        </button>
        <nav className="flex gap-[19px] pt-[4px] leading-[14px]">
            {MENU.map((item) => (
                <button key={item} className={`relative ${item === 'Auto Trading' ? 'mr-2' : ''}`}>
                    {item}
                    {item === 'Auto Trading' && <span className="absolute -right-[11px] -top-[7px] font-['Liberation_Sans'] text-[8px] font-bold italic text-[#e04848]">beta</span>}
                </button>
            ))}
        </nav>
        <div className="ml-auto flex items-center pr-[3px]">
            <button aria-label="Screen" className="mr-[7px]"><svg viewBox="0 0 17 14" className="h-[14px] w-[17px]" aria-hidden="true"><rect width="17" height="14" rx="2" fill="#999" /><path d="M2.5 4.5h12V11h-3l-1.5 1.5L8.5 11h-6Z" fill="#fff" /></svg></button>
            <button aria-label="Wallet" className="mr-[7px] flex h-[19px] w-[21px] items-center justify-center rounded-[2px] border border-[#5b9bc8] bg-[#e8f2fa]"><svg viewBox="0 0 15 14" className="h-[14px] w-[15px]" aria-hidden="true"><rect width="15" height="14" rx="2" fill="#f8b040" /><path d="M2 4h11v6H2Z" fill="#fff" /><circle cx="10.5" cy="7" r="1.5" fill="#f8b040" /></svg></button>
            <span>Connectivity:</span>
            <span className="mx-1 h-[10px] w-[10px] rounded-full bg-[#0c8a18]"></span>
            <span>Forex</span>
        </div>
    </div>
)

const TabStrip = () => {
    const [active, setActive] = useState('Day Trader 120')
    return (
        <div className="flex items-end pl-[7px] pt-px">
            {TABS.map(({ name, width }) => (
                <div key={name} className={`flex items-center justify-between border border-b-0 border-[#777] pl-[5px] pr-[6px] text-[10px] ${width} ${active === name ? 'h-[18px] bg-white pb-[2px]' : 'h-[16px] bg-linear-to-b from-[#f4f4f4] to-[#d4d4d4]'}`}>
                    <svg viewBox="0 0 10 10" className="h-[10px] w-[10px]" aria-hidden="true"><path d="M9.5.5 4.5 4 6 5.5Z" fill="#222" stroke="#222" /><path d="M4 4.5 5.5 6Q5 9 .5 9.5 2.5 8 2.5 6 3 4.5 4 4.5" fill="#555" /></svg>
                    <button onClick={() => setActive(name)} className="whitespace-nowrap">{name}</button>
                    <button aria-label={`Close ${name}`}><svg viewBox="0 0 8 8" className="h-2 w-[7px]" aria-hidden="true"><path d="m1 1 6 6m0-6L1 7" stroke="#1f4a42" strokeWidth="2.2" /></svg></button>
                </div>
            ))}
            <button aria-label="New workspace" className="ml-[2px] flex h-[16px] w-[18px] items-center justify-center rounded-tr-[6px] border border-b-0 border-[#999] bg-[#f6f6f6]"><svg viewBox="0 0 12 12" className="h-3 w-3" aria-hidden="true"><path d="M6 0v12M0 6h12" stroke="#345a90" strokeWidth="3.4" /></svg></button>
        </div>
    )
}

const App = () => (
    <div className="min-h-screen bg-white pb-[6px] font-['Open_Sans',sans-serif] text-[#1a1a1a]">
        <div className="flex h-[23px] items-center gap-[6px] pl-[6px]">
            <span className="mt-[8px]"><Globe size="h-[15px] w-[15px]" /></span>
            <span className="text-[10px] text-[#222]">Ultimate Charting V 1.7.2.0</span>
        </div>
        <MenuBar />
        <TabStrip />
        <div className="mx-[6px] border border-[#a8a8a8] p-[3px]">
            <ChartWindow />
        </div>
    </div>
)

export default App
